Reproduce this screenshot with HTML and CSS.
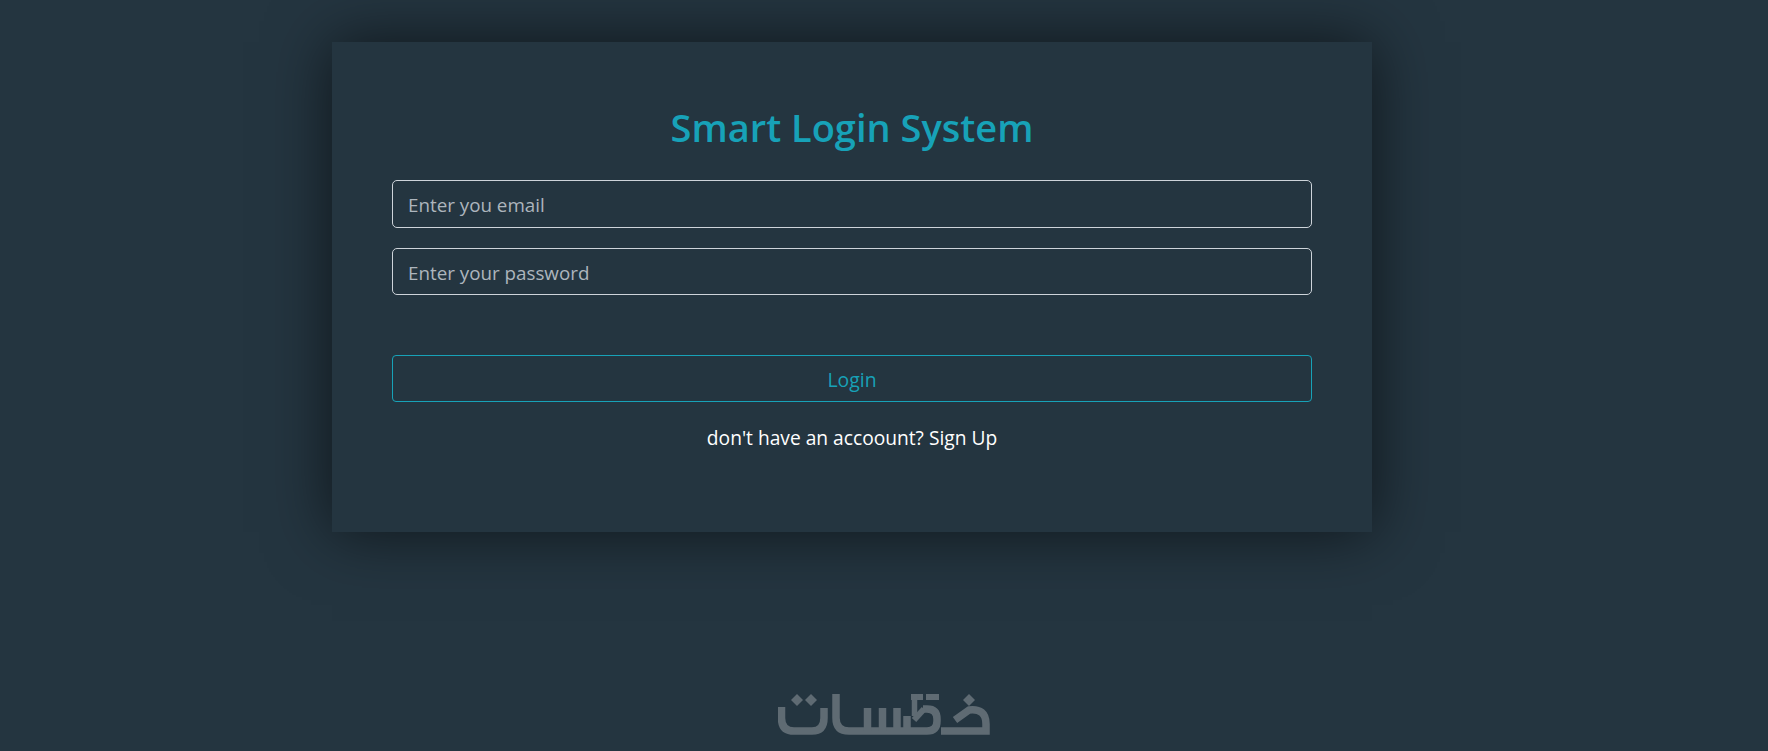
FILE: index.html
```html
<!DOCTYPE html>
<html lang="en">
<head>
  <meta charset="UTF-8">
  <meta name="viewport" content="width=device-width, initial-scale=1.0">
  <title>Smart Login System</title>
  <link rel="stylesheet" href="styles.css">
</head>
<body>
  <div class="login-card">
    <h1 class="login-title">Smart Login System</h1>
    <input class="login-input" type="email" placeholder="Enter you email">
    <input class="login-input" type="password" placeholder="Enter your password">
    <button class="login-btn" type="button">Login</button>
    <p class="login-note">don't have an accoount? <a href="#">Sign Up</a></p>
  </div>

  <div class="brand">
    <svg class="brand-logo" viewBox="778 694 212 41" width="212" height="41" aria-label="khamsat logo">
      <g fill="none" stroke="#5f6b73" stroke-width="7.500">
        <path d="M781.500 707V718Q781.500 731 794 731H812Q824 731 824 718V708"/>
        <path d="M836 694V718Q836 731 849 731H927Q937 731 937 721V719Q937 709 927 709H923"/>
        <path d="M867.500 708V731"/>
        <path d="M882.500 708V731"/>
        <path d="M897 708V731"/>
        <path d="M907 716V731"/>
        <path d="M911 697H923M926 697H939" stroke-width="6"/>
        <path d="M914.500 694V716" stroke-width="5.500"/>
        <path d="M914 720L924 709" stroke-width="6"/>
        <path d="M955 720L969 710Q986 708 986 724V731H941"/>
      </g>
      <g fill="#5f6b73">
        <path d="M791 700l6-6 6 6-6 6z"/>
        <path d="M805 700l6-6 6 6-6 6z"/>
        <path d="M963 700l6-6 6 6-6 6z"/>
      </g>
    </svg>
  </div>
</body>
</html>
```

FILE: styles.css
```css
* {
  margin: 0;
  padding: 0;
  box-sizing: border-box;
}

body {
  font-family: "Open Sans", "Noto Sans", sans-serif;
  background-color: #243540;
  min-height: 100vh;
  overflow: hidden;
  padding-top: 42px;
  color: #fff;
}

.login-card {
  width: 1040px;
  height: 490px;
  margin-left: 332px;
  padding: 61px 60px 0;
  background: #243540;
  box-shadow: 0 0 60px rgba(0,0,0,0.6);
  text-align: center;
}

.login-title {
  color: #17a2b8;
  font-size: 38px;
  font-weight: 600;
  line-height: 48px;
  margin-bottom: 29px;
}

.login-input {
  display: block;
  width: 100%;
  height: 47.5px;
  padding: 3px 15px 0;
  margin-bottom: 20px;
  background: transparent;
  border: 1px solid #ced4da;
  border-radius: 5px;
  font-family: inherit;
  font-size: 18.8px;
  color: #fff;
}

.login-input::placeholder {
  color: #adb5bd;
  opacity: 1;
}

.login-btn {
  display: block;
  width: 100%;
  height: 47px;
  padding-top: 2px;
  margin-top: 60px;
  background: transparent;
  border: 1px solid #17a2b8;
  border-radius: 4px;
  font-family: inherit;
  font-size: 19.4px;
  color: #17a2b8;
}

.login-note {
  margin-top: 21.5px;
  font-size: 19.2px;
  line-height: 27px;
}

.login-note a {
  color: #fff;
  text-decoration: none;
}

.brand {
  display: flex;
  justify-content: center;
  margin-top: 162px;
}

.brand-logo {
  display: block;
}
```
